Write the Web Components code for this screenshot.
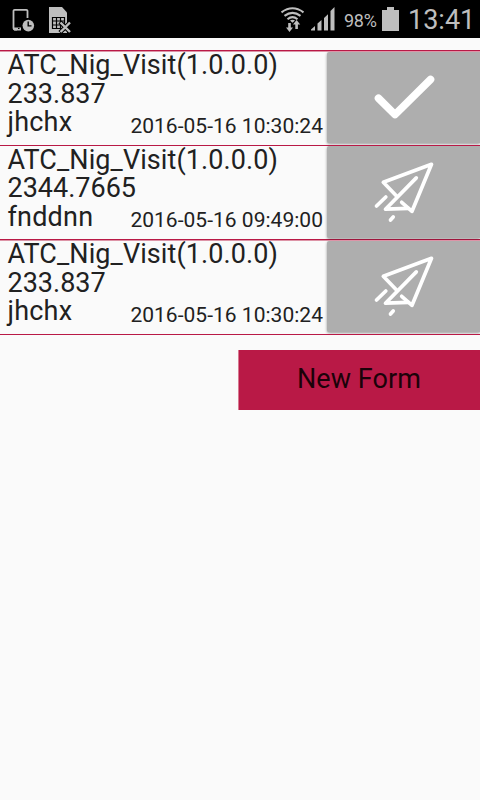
<!DOCTYPE html>
<html lang="en">
<head>
<meta charset="utf-8">
<title>Forms</title>
<style>
  body {
    margin: 0;
    height: 800px;
    overflow: hidden;
    background: #fafafa;
    color: #212121;
    font-family: Roboto, "Noto Sans", sans-serif;
  }
</style>
</head>
<body>
<status-bar battery="98%" time="13:41"></status-bar>
<form-list>
  <form-row status="sent" style="--row-height: 95px; --soft-line: #dd94a7">
    ATC_Nig_Visit(1.0.0.0)
    <span slot="value">233.837</span>
    <span slot="name">jhchx</span>
    <span slot="date">2016-05-16 10:30:24</span>
  </form-row>
  <form-row status="pending" style="--row-height: 94px; --value-line: 28px; --date-gap: 3px; --tile-lift: -1px">
    ATC_Nig_Visit(1.0.0.0)
    <span slot="value">2344.7665</span>
    <span slot="name">fnddnn</span>
    <span slot="date">2016-05-16 09:49:00</span>
  </form-row>
  <form-row status="pending" style="--row-height: 95px; --soft-line: #dd94a7">
    ATC_Nig_Visit(1.0.0.0)
    <span slot="value">233.837</span>
    <span slot="name">jhchx</span>
    <span slot="date">2016-05-16 10:30:24</span>
  </form-row>
</form-list>
<form-button>New Form</form-button>

<script>
class StatusBar extends HTMLElement {
  constructor() {
    super();
    this.attachShadow({ mode: 'open' });
  }

  connectedCallback() {
    this.render();
  }

  render() {
    this.shadowRoot.innerHTML = `
      <style>
        :host {
          display: flex;
          align-items: center;
          height: 38px;
          background: #000;
          color: #bebebe;
          white-space: nowrap;
        }
        svg {
          display: block;
          flex: none;
        }
        .left {
          flex: 1;
        }
        .battery {
          width: 34px;
          font-size: 18px;
          line-height: 38px;
          margin: 4px 4px 0 8px;
          letter-spacing: -0.3px;
        }
        .time {
          width: 72px;
          font-size: 27px;
          line-height: 38px;
          margin-top: 2px;
          margin-left: 8px;
        }
      </style>
      <div class="left">
        <svg width="80" height="38" viewBox="0 0 80 38">
          <path d="M17 29.500h-2.300a1.200 1.200 0 0 1-1.200-1.200V11a1.200 1.200 0 0 1 1.200-1.200h11.600a1.200 1.200 0 0 1 1.200 1.200v7" fill="none" stroke="#bebebe" stroke-width="1.8"/>
          <path d="M13 27.500h8v2.900h-7z" fill="#bebebe"/>
          <path d="M18 28.500h1.500" stroke="#000"/>
          <circle cx="28.3" cy="25.6" r="5.8" fill="#bebebe"/>
          <path d="M28.200 21.500v4.400h3.300" fill="none" stroke="#000" stroke-width="1.4"/>
          <path d="M49 7h13l5 5.500V33H49z" fill="#bebebe"/>
          <path d="M52.500 17.500h12v11h-12zM56.500 17.500v11M60.500 17.500v11M52.500 21h12M52.500 25h12" fill="none" stroke="#000" stroke-width="1.2"/>
          <path d="M60 22l10.500 10.500M70.500 22L60 32.500" stroke="#000" stroke-width="4.5"/>
          <path d="M60.500 22.500l9.500 9.500M70 22.500L60.500 32" stroke="#bebebe" stroke-width="2.4"/>
        </svg>
      </div>
      <svg width="56" height="38" viewBox="280 0 56 38">
        <g fill="none" stroke="#bebebe" stroke-width="2.1">
          <path d="M281.500 12.300q11-8 22 0"/>
          <path d="M284.500 15.900q8-6 16 0"/>
          <path d="M287.500 19.200q5-4 10 0"/>
        </g>
        <path d="M290 20.500q2.500-1.500 5 0l-2.500 2.300zM288.200 23h2.600v4.500h2.200l-3.500 4.500-3.500-4.500h2.200zM295.300 29v-4.500H293l3.600-4.500 3.600 4.500h-2.300V29z" fill="#bebebe"/>
        <path d="M311 30.500v-1l4-3.500v4.500zM317.500 30.500v-7l4-3.500v10.500zM324 30.500V18l4-3.700v16.200zM330.500 30.500V11l4-4v23.500z" fill="#bebebe"/>
      </svg>
      <span class="battery">${this.getAttribute('battery')}</span>
      <svg width="18" height="38" viewBox="382 0 18 38">
        <path d="M387 7h7v3h5v21h-17V10h5z" fill="#bebebe"/>
      </svg>
      <span class="time">${this.getAttribute('time')}</span>
    `;
  }
}

class FormList extends HTMLElement {
  constructor() {
    super();
    this.attachShadow({ mode: 'open' });
    this.shadowRoot.innerHTML = `
      <style>
        :host {
          display: flex;
          flex-direction: column;
          margin-top: 12px;
          border-bottom: 1px solid #b91946;
        }
      </style>
      <slot></slot>
    `;
  }
}

class FormRow extends HTMLElement {
  constructor() {
    super();
    this.attachShadow({ mode: 'open' });
  }

  static get observedAttributes() {
    return ['status'];
  }

  attributeChangedCallback() {
    this.render();
  }

  get icon() {
    if (this.getAttribute('status') === 'sent') {
      return '<path d="M51.500 48.200L68 64.600 103.500 29.500" stroke-width="7.6"/>';
    }
    return `
      <path d="M70 51.500L56.300 37.300 104.500 19.300 85 66.300 74.700 57.300" stroke-width="3.7"/>
      <path d="M89.300 32.900L58.500 64.200 81.500 63.300" stroke-width="3.7"/>
      <path d="M58.800 52L49.500 61M66.200 72L63.500 75" stroke-width="3.7"/>
    `;
  }

  render() {
    this.shadowRoot.innerHTML = `
      <style>
        :host {
          display: flex;
          box-sizing: border-box;
          height: var(--row-height, 95px);
          border-top: 1px solid #b91946;
        }
        .info {
          display: grid;
          grid-template-columns: auto 1fr;
          grid-template-rows: 27.5px 28.5px 28.5px;
          width: 327px;
          box-sizing: border-box;
          padding-left: 7.5px;
          border-top: 1px solid var(--soft-line, transparent);
          font-size: 27px;
          line-height: 28.5px;
          white-space: nowrap;
        }
        .wide {
          grid-column: 1 / -1;
        }
        .title {
          margin-top: -1px;
          letter-spacing: 0.1px;
        }
        .value {
          line-height: var(--value-line, 28.5px);
          margin-top: calc(var(--value-line, 28.5px) - 28.5px);
        }
        .name {
          letter-spacing: 0.2px;
        }
        .date {
          text-align: right;
          font-size: 21px;
          padding: var(--date-gap, 4px) 4px 0 0;
          letter-spacing: 0.02px;
        }
        .action {
          flex: 1;
          border-top: 1px solid var(--soft-line, transparent);
        }
        .tile {
          display: flex;
          height: 91px;
          margin-top: var(--tile-lift, 0);
          padding-bottom: calc(var(--tile-lift, 0px) * -1);
          background: #aeaeae;
          border-radius: 2px 0 0 2px;
          box-shadow: 0 1px 3px rgba(0, 0, 0, 0.4);
          clip-path: inset(0 0 -2px -5px);
        }
        svg {
          display: block;
          margin-top: calc(var(--tile-lift, 0px) * -1);
          fill: none;
          stroke: #fff;
          stroke-linecap: round;
          stroke-linejoin: round;
        }
      </style>
      <div class="info">
        <div class="wide title"><slot></slot></div>
        <div class="wide value"><slot name="value"></slot></div>
        <div class="name"><slot name="name"></slot></div>
        <div class="date"><slot name="date"></slot></div>
      </div>
      <div class="action">
        <div class="tile">
          <svg width="153" height="91" viewBox="0 2 153 91">${this.icon}</svg>
        </div>
      </div>
    `;
  }
}

class FormButton extends HTMLElement {
  constructor() {
    super();
    this.attachShadow({ mode: 'open' });
    this.shadowRoot.innerHTML = `
      <style>
        :host {
          display: flex;
          align-items: center;
          justify-content: center;
          box-sizing: border-box;
          width: 242px;
          height: 60px;
          margin: 15px 0 0 auto;
          border-left: 1px solid #d77991;
          background: #b91946;
          background-clip: padding-box;
          color: #1b0209;
          font-size: 27px;
          letter-spacing: 0.1px;
          padding: 0 1px 3px 0;
        }
      </style>
      <slot></slot>
    `;
  }
}

customElements.define('status-bar', StatusBar);
customElements.define('form-list', FormList);
customElements.define('form-row', FormRow);
customElements.define('form-button', FormButton);
</script>
</body>
</html>
